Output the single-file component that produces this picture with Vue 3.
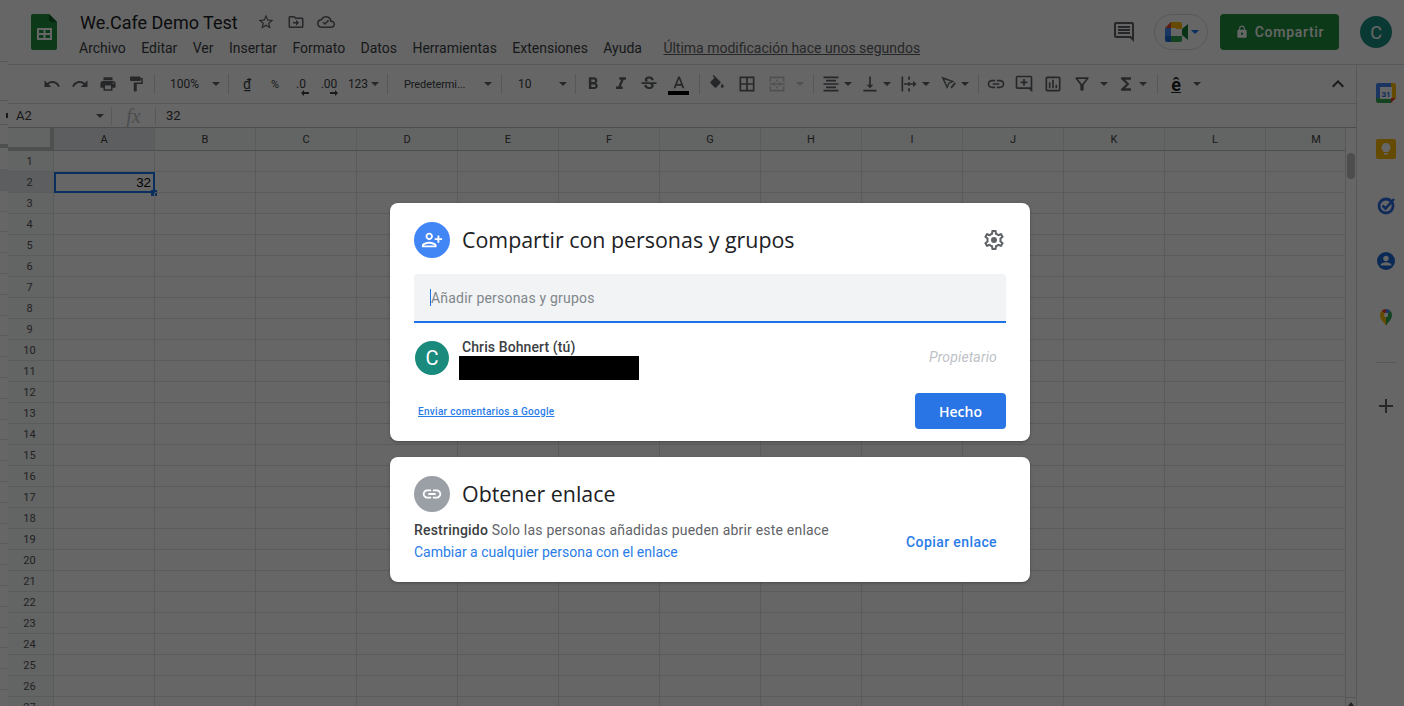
<template>
  <div class="page">
    <header class="topbar">
      <svg class="sheets-logo" viewBox="0 0 26 36" width="26" height="36">
        <path d="M2 0h16l8 8v26a2 2 0 0 1-2 2H2a2 2 0 0 1-2-2V2a2 2 0 0 1 2-2z" fill="#1e8e3e" />
        <path d="M18 0l8 8h-6a2 2 0 0 1-2-2z" fill="#0f5c27" />
        <path d="M6 14h15v12H6zm2 2v3h4.500v-3zm6.500 0v3H19v-3zM8 21v3h4.500v-3zm6.500 0v3H19v-3z" fill="#fff" fill-rule="evenodd" />
      </svg>
      <div class="doc">
        <div class="doc-title">
          <span class="doc-name">We.Cafe Demo Test</span>
          <svg class="ico" viewBox="0 0 24 24" width="18" height="18"><path :d="icons.star" /></svg>
          <svg class="ico" viewBox="0 0 24 24" width="18" height="18"><path :d="icons.move" /></svg>
          <svg class="ico" viewBox="0 0 24 24" width="18" height="18"><path :d="icons.cloud" /></svg>
        </div>
        <nav class="menu">
          <span v-for="m in menus" :key="m">{{ m }}</span>
          <a class="last-edit">Última modificación hace unos segundos</a>
        </nav>
      </div>
      <div class="top-actions">
        <svg class="ico comment" viewBox="0 0 24 24" width="24" height="24"><path :d="icons.comment" /></svg>
        <div class="meet">
          <svg viewBox="0 0 24 20" width="24" height="20">
            <path d="M0 6l6-6h9v6z" fill="#ea4335" />
            <path d="M6 0h9a2 2 0 0 1 2 2v5h-6V6H6z" fill="#fbbc04" />
            <path d="M0 6h6v8H0z" fill="#4285f4" />
            <path d="M0 14h6v6H2a2 2 0 0 1-2-2z" fill="#1967d2" />
            <path d="M6 14h11v4a2 2 0 0 1-2 2H6z" fill="#34a853" />
            <path d="M17 7l6-5v16l-6-5z" fill="#188038" />
          </svg>
          <i class="caret meet-caret"></i>
        </div>
        <button class="share">
          <svg viewBox="0 0 24 24" width="14" height="14"><path :d="icons.lock" fill="#fff" /></svg>
          Compartir
        </button>
        <div class="avatar top-avatar">C</div>
      </div>
    </header>

    <div class="body">
      <div class="main">
        <div class="toolbar">
          <template v-for="(t, i) in tools" :key="i">
            <i v-if="t.k === 'sep'" class="sep" :style="{ margin: `0 ${t.r || 0}px 0 ${t.l || 0}px` }"></i>
            <i v-else-if="t.k === 'caret'" class="caret" :class="{ faded: t.off }" :style="{ margin: `0 ${t.m || 0}px 0 ${t.l || 0}px` }"></i>
            <span v-else-if="t.k === 'text'" class="tool-text" :class="t.c" :style="{ width: t.w + 'px' }">
              {{ t.t }}
              <svg v-if="t.arrow" class="dec-arrow" :class="t.arrow" viewBox="0 0 8 6" width="8" height="6"><path d="M0 3l3-3v2h5v2H3v2z" /></svg>
            </span>
            <span v-else class="tool" :style="{ width: (t.w || 28) + 'px' }">
              <svg class="ico" :class="{ faded: t.off }" viewBox="0 0 24 24" :width="t.s || 18" :height="t.s || 18"><path :d="icons[t.i]" /></svg>
              <b v-if="t.bar" class="color-bar"></b>
            </span>
          </template>
          <svg class="ico collapse" viewBox="0 0 24 24" width="24" height="24"><path d="M7.41 15.41L12 10.83l4.59 4.58L18 14l-6-6-6 6z" /></svg>
        </div>

        <div class="formula">
          <span class="name-box">A2<i class="caret"></i></span>
          <span class="fx">fx</span>
          <span class="formula-value">32</span>
        </div>

        <div class="grid-wrap">
          <div class="grid">
            <div class="corner"></div>
            <div v-for="(c, i) in cols" :key="c" class="col-head" :class="{ active: i === 0 }">{{ c }}</div>
            <template v-for="r in rows" :key="r">
              <div class="row-head" :class="{ active: r === 2 }">{{ r }}</div>
              <div v-for="(c, i) in cols" :key="c" class="cell">
                <template v-if="r === 2 && i === 0">32<i class="sel"><b></b></i></template>
              </div>
            </template>
          </div>
          <div class="scroll"><i></i></div>
        </div>
      </div>

      <aside class="side">
        <svg viewBox="0 0 20 20" width="20" height="20">
          <path d="M0 0h20v20H0z" fill="#fff" />
          <path d="M0 2a2 2 0 0 1 2-2h13v4H4v11H0z" fill="#4285f4" />
          <path d="M15 0h3a2 2 0 0 1 2 2v13h-4V4h-1z" fill="#fbbc04" />
          <path d="M0 15h4v1h11v4H2a2 2 0 0 1-2-2z" fill="#34a853" />
          <path d="M15 15h5v0l-5 5z" fill="#ea4335" />
          <text x="10" y="13.500" class="cal-num">31</text>
        </svg>
        <svg viewBox="0 0 20 20" width="20" height="20">
          <rect width="20" height="20" rx="2" fill="#fbbc04" />
          <path d="M10 4a4.500 4.500 0 0 0-2.500 8.200V13h5v-.8A4.500 4.500 0 0 0 10 4zM8 14h4v1.500H8z" fill="#fff" />
        </svg>
        <svg viewBox="0 0 20 20" width="20" height="20">
          <circle cx="10" cy="11" r="7" fill="none" stroke="#2a6ae0" stroke-width="2.800" />
          <path d="M6.500 10.500l3 3L18 4" fill="none" stroke="#2a6ae0" stroke-width="2.600" />
        </svg>
        <svg viewBox="0 0 20 20" width="20" height="20">
          <circle cx="10" cy="10" r="9" fill="#1a67d2" />
          <circle cx="10" cy="7.500" r="2.700" fill="#fff" />
          <path d="M4.500 14.500c0-2.200 3.600-3.300 5.500-3.300s5.500 1.100 5.500 3.300z" fill="#fff" />
        </svg>
        <svg viewBox="0 0 20 20" width="20" height="20">
          <path d="M10 19c-1-3-6-6-6-11a6 6 0 0 1 1.700-4.200L10 8z" fill="#fbbc04" />
          <path d="M5.700 3.800A6 6 0 0 1 10 2l2 2-2 4z" fill="#ea4335" />
          <path d="M10 2a6 6 0 0 1 4.300 1.800L10 8z" fill="#4285f4" />
          <path d="M14.300 3.800A6 6 0 0 1 16 8c0 5-5 8-6 11V8z" fill="#34a853" />
          <circle cx="10" cy="8" r="2.200" fill="#fff" />
        </svg>
        <hr />
        <svg class="ico plus" viewBox="0 0 24 24" width="24" height="24"><path d="M19 13h-6v6h-2v-6H5v-2h6V5h2v6h6v2z" /></svg>
      </aside>
    </div>

    <div class="left-strip"></div>

    <div class="overlay">
      <section class="card share-card">
        <div class="card-head">
          <span class="round blue">
            <svg viewBox="0 0 24 24" width="22" height="22"><path :d="icons.personAdd" fill="#fff" transform="matrix(-1 0 0 1 24 0)" /></svg>
          </span>
          <h2>Compartir con personas y grupos</h2>
          <svg class="ico gear" viewBox="0 0 24 24" width="24" height="24"><path :d="icons.gear" fill-rule="evenodd" /><circle cx="12" cy="12" r="3" /></svg>
        </div>
        <div class="add-field"><i class="cursor"></i>Añadir personas y grupos</div>
        <div class="person">
          <div class="avatar">C</div>
          <div class="person-info">
            <div class="person-name">Chris Bohnert (tú)</div>
            <div class="redacted"></div>
          </div>
          <em>Propietario</em>
        </div>
        <div class="share-foot">
          <a class="feedback">Enviar comentarios a Google</a>
          <button class="done">Hecho</button>
        </div>
      </section>

      <section class="card link-card">
        <div class="card-head">
          <span class="round grey">
            <svg viewBox="0 0 24 24" width="22" height="22"><path :d="icons.link" fill="#fff" /></svg>
          </span>
          <h2>Obtener enlace</h2>
        </div>
        <div class="link-body">
          <div>
            <p><strong>Restringido</strong> Solo las personas añadidas pueden abrir este enlace</p>
            <a class="change">Cambiar a cualquier persona con el enlace</a>
          </div>
          <a class="copy">Copiar enlace</a>
        </div>
      </section>
    </div>
  </div>
</template>

<script setup>
const icons = {
  star: 'M22 9.24l-7.19-.62L12 2 9.19 8.63 2 9.24l5.46 4.73L5.82 21 12 17.27 18.18 21l-1.63-7.03L22 9.24zM12 15.4l-3.76 2.27 1-4.28-3.32-2.88 4.38-.38L12 6.1l1.71 4.04 4.38.38-3.32 2.88 1 4.28L12 15.4z',
  move: 'M20 6h-8l-2-2H4c-1.1 0-2 .9-2 2v12c0 1.1.9 2 2 2h16c1.1 0 2-.9 2-2V8c0-1.1-.9-2-2-2zm0 12H4V6h5.17l2 2H20v10zm-8-1l4-4-4-4v3H8v2h4z',
  cloud: 'M19.35 10.04A7.49 7.49 0 0 0 12 4C9.11 4 6.6 5.64 5.35 8.04A5.994 5.994 0 0 0 0 14c0 3.31 2.69 6 6 6h13c2.76 0 5-2.24 5-5 0-2.64-2.05-4.78-4.65-4.96zM19 18H6c-2.21 0-4-1.79-4-4s1.79-4 4-4h.71C7.37 7.69 9.48 6 12 6c3.04 0 5.5 2.46 5.5 5.5v.5H19c1.66 0 3 1.34 3 3s-1.34 3-3 3zm-8.5-2l-3-3 1.4-1.4 1.6 1.6 4.1-4.1 1.4 1.4z',
  comment: 'M21.99 4c0-1.1-.89-2-1.99-2H4c-1.1 0-2 .9-2 2v12c0 1.1.9 2 2 2h14l4 4-.01-18zM20 4v13.17L18.83 16H4V4h16zM6 12h12v2H6zm0-3h12v2H6zm0-3h12v2H6z',
  lock: 'M18 8h-1V6c0-2.76-2.24-5-5-5S7 3.24 7 6v2H6c-1.1 0-2 .9-2 2v10c0 1.1.9 2 2 2h12c1.1 0 2-.9 2-2V10c0-1.1-.9-2-2-2zm-6 9c-1.1 0-2-.9-2-2s.9-2 2-2 2 .9 2 2-.9 2-2 2zm3.1-9H8.9V6c0-1.71 1.39-3.1 3.1-3.1 1.71 0 3.1 1.39 3.1 3.1v2z',
  undo: 'M12.5 8c-2.65 0-5.05.99-6.9 2.6L2 7v9h9l-3.62-3.62c1.39-1.16 3.16-1.88 5.12-1.88 3.54 0 6.55 2.31 7.6 5.5l2.37-.78C21.08 11.03 17.15 8 12.5 8z',
  redo: 'M18.4 10.6C16.55 8.99 14.15 8 11.5 8c-4.65 0-8.58 3.03-9.96 7.22L3.9 16c1.05-3.19 4.05-5.5 7.6-5.5 1.95 0 3.73.72 5.12 1.88L13 16h9V7l-3.6 3.6z',
  print: 'M19 8H5c-1.66 0-3 1.34-3 3v6h4v4h12v-4h4v-6c0-1.66-1.34-3-3-3zm-3 11H8v-5h8v5zm3-7c-.55 0-1-.45-1-1s.45-1 1-1 1 .45 1 1-.45 1-1 1zm-1-9H6v4h12V3z',
  paint: 'M18 4V3c0-.55-.45-1-1-1H5c-.55 0-1 .45-1 1v4c0 .55.45 1 1 1h12c.55 0 1-.45 1-1V6h1v4H9v11c0 .55.45 1 1 1h2c.55 0 1-.45 1-1v-9h8V4h-3z',
  bold: 'M15.6 10.79c.97-.67 1.65-1.77 1.65-2.79 0-2.26-1.75-4-4-4H7v14h7.04c2.09 0 3.71-1.7 3.71-3.79 0-1.52-.86-2.82-2.15-3.42zM10 6.5h3c.83 0 1.5.67 1.5 1.5s-.67 1.5-1.5 1.5h-3v-3zm3.5 9H10v-3h3.5c.83 0 1.5.67 1.5 1.5s-.67 1.5-1.5 1.5z',
  italic: 'M10 4v3h2.21l-3.42 8H6v3h8v-3h-2.21l3.42-8H18V4z',
  strike: 'M7.24 8.75c-.26-.48-.39-1.03-.39-1.67 0-.61.13-1.16.4-1.67.26-.5.63-.93 1.11-1.29.48-.35 1.05-.63 1.7-.83.66-.19 1.39-.29 2.18-.29.81 0 1.54.11 2.21.34.66.22 1.23.54 1.69.94.47.4.83.88 1.08 1.43.25.55.38 1.15.38 1.81h-3.01c0-.31-.05-.59-.15-.85-.09-.27-.24-.49-.44-.68-.2-.19-.45-.33-.75-.44-.3-.1-.66-.16-1.06-.16-.39 0-.74.04-1.03.13-.29.09-.53.21-.72.36-.19.16-.34.34-.44.55-.1.21-.15.43-.15.66 0 .48.25.88.74 1.21.38.25.77.48 1.41.7H7.39c-.05-.08-.11-.17-.15-.25zM21 12v-2H3v2h9.62c.18.07.4.14.55.2.37.17.66.34.87.51.21.17.35.36.43.57.07.2.11.43.11.69 0 .23-.05.45-.14.66-.09.2-.23.38-.42.53-.19.15-.42.26-.71.35-.29.08-.63.13-1.01.13-.43 0-.83-.04-1.18-.13s-.66-.23-.91-.42c-.25-.19-.45-.44-.59-.75-.14-.31-.25-.76-.25-1.21H6.4c0 .55.08 1.13.24 1.58.16.45.37.85.65 1.21.28.35.6.66.98.92.37.26.78.48 1.22.65.44.17.9.3 1.38.39.48.08.96.13 1.44.13.8 0 1.53-.09 2.18-.28s1.21-.45 1.67-.79c.46-.34.82-.77 1.07-1.27s.38-1.07.38-1.71c0-.6-.1-1.14-.31-1.61-.05-.11-.11-.23-.17-.33H21z',
  textColor: 'M11 3L5.5 17h2.25l1.12-3h6.25l1.12 3h2.25L13 3h-2zm-1.38 9L12 5.67 14.38 12H9.62z',
  fill: 'M16.56 8.94L7.62 0 6.21 1.41l2.38 2.38-5.15 5.15c-.59.59-.59 1.54 0 2.12l5.5 5.5c.29.29.68.44 1.06.44s.77-.15 1.06-.44l5.5-5.5c.59-.58.59-1.53 0-2.12zM19 11.5s-2 2.17-2 3.5c0 1.1.9 2 2 2s2-.9 2-2c0-1.33-2-3.5-2-3.5z',
  borders: 'M3 3v18h18V3H3zm8 16H5v-6h6v6zm0-8H5V5h6v6zm8 8h-6v-6h6v6zm0-8h-6V5h6v6z',
  merge: 'M3 3h18v6h-2V5H5v4H3zM3 15h2v4h14v-4h2v6H3zM11 7h2v2h-2zM11 11h2v2h-2zM11 15h2v2h-2zM3 11h5V9l3 3-3 3v-2H3zM21 13h-5v2l-3-3 3-3v2h5z',
  align: 'M3 3h18v2H3zm3 4h12v2H6zM3 11h18v2H3zm3 4h12v2H6zM3 19h18v2H3z',
  valign: 'M16 13h-3V3h-2v10H8l4 4 4-4zM4 19v2h16v-2H4z',
  wrap: 'M3 3h2v18H3zM11 3h2v4h-2zM11 10h2v4h-2zM11 17h2v4h-2zM6 11h11V8l4 4-4 4v-3H6z',
  rotate: 'M4 3l16 6-6.2 2.300L11 18 4 3zm3.500 3.600L11.100 14l1.500-3.800 3.300-1.200zM15 16l5-6 1.500 1.300-5 6z',
  link: 'M3.9 12c0-1.71 1.39-3.1 3.1-3.1h4V7H7c-2.76 0-5 2.24-5 5s2.24 5 5 5h4v-1.9H7c-1.71 0-3.1-1.39-3.1-3.1zM8 13h8v-2H8v2zm9-6h-4v1.9h4c1.71 0 3.1 1.39 3.1 3.1s-1.39 3.1-3.1 3.1h-4V17h4c2.76 0 5-2.24 5-5s-2.24-5-5-5z',
  addComment: 'M21.99 4c0-1.1-.89-2-1.99-2H4c-1.1 0-2 .9-2 2v12c0 1.1.9 2 2 2h14l4 4-.01-18zM20 16H4V4h16v12zM11 6h2v3h3v2h-3v3h-2v-3H8V9h3z',
  chart: 'M19 3H5c-1.1 0-2 .9-2 2v14c0 1.1.9 2 2 2h14c1.1 0 2-.9 2-2V5c0-1.1-.9-2-2-2zm0 16H5V5h14v14zM7 10h2v7H7zm4-3h2v10h-2zm4 6h2v4h-2z',
  filter: 'M4.25 5.61C6.27 8.2 10 13 10 13v6c0 .55.45 1 1 1h2c.55 0 1-.45 1-1v-6s3.72-4.8 5.74-7.39A1 1 0 0 0 18.95 4H5.04a1 1 0 0 0-.79 1.61zM7 6h10l-5 6.3z',
  sigma: 'M18 4H6v2l6.5 6L6 18v2h12v-3h-7l5-5-5-5h7z',
  personAdd: 'M15 12c2.21 0 4-1.79 4-4s-1.79-4-4-4-4 1.79-4 4 1.79 4 4 4zm0-6c1.1 0 2 .9 2 2s-.9 2-2 2-2-.9-2-2 .9-2 2-2zm0 8c-2.67 0-8 1.34-8 4v2h16v-2c0-2.66-5.33-4-8-4zm-6 4c.22-.72 3.31-2 6-2 2.7 0 5.8 1.29 6 2H9zm-3-3v-3h3v-2H6V7H4v3H1v2h3v3h2z',
  gear: 'M19.43 12.98c.04-.32.07-.64.07-.98 0-.34-.03-.66-.07-.98l2.11-1.65c.19-.15.24-.42.12-.64l-2-3.46c-.09-.16-.26-.25-.44-.25-.06 0-.12.01-.17.03l-2.49 1c-.52-.4-1.08-.73-1.69-.98l-.38-2.65C14.46 2.18 14.25 2 14 2h-4c-.25 0-.46.18-.49.42l-.38 2.65c-.61.25-1.17.59-1.69.98l-2.49-1c-.06-.02-.12-.03-.18-.03-.17 0-.34.09-.43.25l-2 3.46c-.13.22-.07.49.12.64l2.11 1.65c-.04.32-.07.65-.07.98 0 .33.03.66.07.98l-2.11 1.65c-.19.15-.24.42-.12.64l2 3.46c.09.16.26.25.44.25.06 0 .12-.01.17-.03l2.49-1c.52.4 1.08.73 1.69.98l.38 2.65c.03.24.24.42.49.42h4c.25 0 .46-.18.49-.42l.38-2.65c.61-.25 1.17-.59 1.69-.98l2.49 1c.06.02.12.03.18.03.17 0 .34-.09.43-.25l2-3.46c.12-.22.07-.49-.12-.64l-2.11-1.65zm-1.98-1.71c.04.31.05.52.05.73 0 .21-.02.43-.05.73l-.14 1.13.89.7 1.08.84-.7 1.21-1.27-.51-1.04-.42-.9.68c-.43.32-.84.56-1.25.73l-1.06.43-.16 1.13-.2 1.35h-1.4l-.19-1.35-.16-1.13-1.06-.43c-.43-.18-.83-.41-1.23-.71l-.91-.7-1.06.43-1.27.51-.7-1.21 1.08-.84.89-.7-.14-1.13c-.03-.31-.05-.54-.05-.74s.02-.43.05-.73l.14-1.13-.89-.7-1.08-.84.7-1.21 1.27.51 1.04.42.9-.68c.43-.32.84-.56 1.25-.73l1.06-.43.16-1.13.2-1.35h1.39l.19 1.35.16 1.13 1.06.43c.43.18.83.41 1.23.71l.91.7 1.06-.43 1.27-.51.7 1.21-1.07.85-.89.7.14 1.13z'
}

const menus = ['Archivo', 'Editar', 'Ver', 'Insertar', 'Formato', 'Datos', 'Herramientas', 'Extensiones', 'Ayuda']

const cols = 'ABCDEFGHIJKLM'.split('')
const rows = Array.from({ length: 27 }, (_, i) => i + 1)

// widths and margins follow the reference's toolbar spacing
const tools = [
  { i: 'undo' }, { i: 'redo' }, { i: 'print' }, { i: 'paint' },
  { k: 'sep', l: 4, r: 15 },
  { k: 'text', t: '100%', w: 42 }, { k: 'caret' },
  { k: 'sep', l: 8, r: 4 },
  { k: 'text', t: '₫', w: 28, c: 'center under' }, { k: 'text', t: '%', w: 28, c: 'center small' },
  { k: 'text', t: '.0', w: 24, c: 'center', arrow: 'left' }, { k: 'text', t: '.00', w: 32, c: 'center', arrow: 'right' },
  { k: 'text', t: '123', w: 26, c: 'center' }, { k: 'caret' },
  { k: 'sep', l: 8, r: 16 },
  { k: 'text', t: 'Predetermi...', w: 80, c: 'tight' }, { k: 'caret' },
  { k: 'sep', l: 9, r: 16 },
  { k: 'text', t: '10', w: 41 }, { k: 'caret' },
  { k: 'sep', l: 8, r: 3 },
  { i: 'bold', s: 20 }, { i: 'italic', s: 20 }, { i: 'strike', s: 20 }, { i: 'textColor', w: 32, s: 20, bar: true },
  { k: 'sep', l: 4, r: 2 },
  { i: 'fill', w: 30 }, { i: 'borders', w: 30, s: 20 }, { i: 'merge', w: 30, s: 20, off: true }, { k: 'caret', off: true, l: 4 },
  { k: 'sep', l: 9, r: 5 },
  { i: 'align', w: 24, s: 20 }, { k: 'caret', l: 1, m: 6 },
  { i: 'valign', w: 24, s: 20 }, { k: 'caret', l: 1, m: 6 },
  { i: 'wrap', w: 24, s: 20 }, { k: 'caret', l: 1, m: 6 },
  { i: 'rotate', w: 24, s: 20 }, { k: 'caret', l: 1 },
  { k: 'sep', l: 9, r: 3 },
  { i: 'link', s: 20 }, { i: 'addComment', s: 20 }, { i: 'chart', w: 30, s: 20 }, { i: 'filter', s: 20 }, { k: 'caret', l: 4, m: 6 },
  { i: 'sigma', w: 24, s: 20 }, { k: 'caret', l: 1 },
  { k: 'sep', l: 10, r: 2 },
  { k: 'text', t: 'ê', w: 32, c: 'center big' }, { k: 'caret', l: 1 }
]
</script>

<style>
html, body { margin: 0; overflow: hidden; }
</style>

<style scoped>
.page {
  position: relative;
  width: 1404px;
  height: 706px;
  overflow: hidden;
  background: #fff;
  font-family: Roboto, "Liberation Sans", sans-serif;
  color: #3c4043;
}

.ico { fill: #5f6368; display: block; flex: none; }
.faded { opacity: .35; }

.caret {
  display: inline-block;
  flex: none;
  width: 0;
  height: 0;
  border: 4px solid transparent;
  border-top: 4px solid #5f6368;
  border-bottom: 0;
}

/* header */
.topbar {
  height: 64px;
  display: flex;
  border-bottom: 1px solid #dadce0;
}
.sheets-logo { margin: 14px 0 0 31px; flex: none; }
.doc { margin-left: 23px; }
.doc-title { display: flex; align-items: center; gap: 12px; height: 22px; margin-top: 11px; }
.doc-name { font-size: 18px; color: #202124; width: 165px; white-space: nowrap; }
.menu { display: flex; gap: 15.4px; margin: 5px 0 0 -1px; font-size: 14px; height: 20px; line-height: 20px; white-space: nowrap; }
.last-edit { margin-left: 6px; color: #5f6368; text-decoration: underline; }
.top-actions { margin-left: auto; display: flex; align-items: center; padding: 14px 12px 0 0; height: 36px; }
.comment { margin-right: 18px; }
.meet {
  width: 54px;
  height: 36px;
  box-sizing: border-box;
  border: 1px solid #dadce0;
  border-radius: 18px;
  display: flex;
  align-items: center;
  padding-left: 10px;
  gap: 2px;
  margin-right: 12px;
}
.meet-caret { border-top-color: #1a73e8; }
.share {
  width: 119px;
  height: 36px;
  border: 0;
  border-radius: 4px;
  background: #1e8e3e;
  color: #fff;
  font: 500 14px Roboto, sans-serif;
  letter-spacing: .7px;
  display: flex;
  align-items: center;
  justify-content: center;
  gap: 6px;
}
.avatar {
  width: 34px;
  height: 34px;
  border-radius: 50%;
  background: #1a8a7c;
  color: #fff;
  font-size: 20px;
  display: flex;
  align-items: center;
  justify-content: center;
  flex: none;
}
.top-avatar { width: 32px; height: 32px; margin-left: 21px; font-size: 18px; background: #1a9080; }

.body { display: flex; height: 641px; }
.main { width: 1356px; flex: none; display: flex; flex-direction: column; }

/* toolbar */
.toolbar {
  height: 38px;
  display: flex;
  align-items: center;
  padding: 0 6px 0 38px;
  border-bottom: 1px solid #dadce0;
}
.tool { display: flex; justify-content: center; align-items: center; flex: none; position: relative; }
.color-bar { position: absolute; left: 5px; top: 17px; width: 21px; height: 4px; background: #000; }
.tool-text { font-size: 12px; flex: none; white-space: nowrap; color: #3c4043; position: relative; }
.tool-text.center { text-align: center; }
.tool-text.big { font-size: 18px; font-weight: 700; color: #202124; text-decoration: underline; }
.tool-text.under { text-decoration: underline; font-size: 14px; }
.tool-text.small { font-size: 11px; }
.tool-text.tight { font-size: 11px; letter-spacing: -.1px; }
.dec-arrow { position: absolute; bottom: -5px; fill: #3c4043; }
.dec-arrow.left { left: 12px; }
.dec-arrow.right { right: 7px; transform: scaleX(-1); }
.sep { width: 1px; height: 20px; background: #dadce0; flex: none; }
.collapse { margin-left: auto; fill: #3c4043; }

/* formula bar */
.formula {
  height: 24px;
  box-sizing: border-box;
  display: flex;
  align-items: center;
  margin-left: 8px;
  border-bottom: 1px solid #c0c0c0;
  flex: none;
}
.name-box {
  width: 104px;
  height: 18px;
  box-sizing: border-box;
  padding: 0 7px 0 8px;
  display: flex;
  justify-content: space-between;
  align-items: center;
  font-size: 13px;
  border-right: 1px solid #dadce0;
}
.fx {
  width: 44px;
  height: 18px;
  box-sizing: border-box;
  text-align: center;
  font: italic 20px/18px "Liberation Serif", serif;
  color: #bdc1c6;
  border-right: 1px solid #dadce0;
}
.formula-value { padding-left: 10px; font-size: 13px; }

/* grid */
.grid-wrap { display: flex; flex: 1; overflow: hidden; }
.grid {
  display: grid;
  grid-template-columns: 54px repeat(13, 101px);
  grid-template-rows: 23px;
  grid-auto-rows: 21px;
  width: 1345px;
  flex: none;
  overflow: hidden;
}
.grid > * { box-sizing: border-box; border-right: 1px solid #e2e3e3; border-bottom: 1px solid #e2e3e3; position: relative; }
.corner { background: #f8f9fa; border-right: 4px solid #c4c7c9 !important; border-bottom: 4px solid #c4c7c9 !important; }
.col-head {
  background: #f8f9fa;
  font-size: 11px;
  text-align: center;
  line-height: 24px;
  color: #444;
  border-bottom-color: #c0c0c0 !important;
}
.col-head.active { background: #e8eaed; }
.row-head { background: #f8f9fa; font-size: 11px; text-align: center; line-height: 22px; color: #555; padding-left: 6px; }
.row-head.active { background: #e8eaed; }
.cell { font: 13.33px/21px "Liberation Sans", sans-serif; text-align: right; padding-right: 3px; color: #000; }
.sel { position: absolute; inset: 0 -1px -1px 0; border: 2px solid #1a73e8; }
.sel b { position: absolute; right: -4px; bottom: -5px; width: 6px; height: 6px; background: #1a73e8; }
.scroll { width: 11px; border-left: 1px solid #dadce0; box-sizing: border-box; flex: none; background: #fff; position: relative; }
.scroll i { display: block; width: 8px; height: 26px; margin: 25px 0 0 1px; background: #c1c1c1; border-radius: 4px; }
.scroll::before { content: ""; position: absolute; left: 0; right: 0; bottom: 8px; border-top: 1px solid #dadce0; }
.scroll::after {
  content: "";
  position: absolute;
  left: 2px;
  bottom: 0;
  border: 3px solid transparent;
  border-bottom: 4px solid #555;
  border-top: 0;
}

/* side panel */
.side {
  width: 48px;
  flex: none;
  border-left: 1px solid #dadce0;
  box-sizing: border-box;
  display: flex;
  flex-direction: column;
  align-items: center;
  padding: 18px 0 0 10px;
  gap: 36px;
}
.cal-num { font: 700 8px Roboto, sans-serif; fill: #1a73e8; text-anchor: middle; }
.side hr { width: 20px; margin: -1px 0 -5px; border: 0; border-top: 1px solid #dadce0; }

/* sliver of the page behind, left edge */
.left-strip {
  position: absolute;
  left: 0;
  top: 0;
  width: 8px;
  height: 100%;
  background:
    linear-gradient(#3c4043, #3c4043) 6px 113px / 2px 5px no-repeat,
    linear-gradient(#c4c7c9, #c4c7c9) 0 144px / 8px 4px no-repeat,
    linear-gradient(#dadce0, #dadce0) 0 61px / 8px 1px no-repeat,
    linear-gradient(#dadce0, #dadce0) 0 100px / 8px 1px no-repeat,
    linear-gradient(#dadce0, #dadce0) 0 124px / 8px 1px no-repeat,
    linear-gradient(#e8eaed, #e8eaed) 0 169px / 8px 21px no-repeat,
    repeating-linear-gradient(#e2e3e3 0 1px, #fff 1px 20.8px) 0 169px / 8px 537px no-repeat,
    #fff;
}

/* dialog */
.overlay {
  position: absolute;
  inset: 0;
  background: rgba(0, 0, 0, .6);
  display: flex;
  flex-direction: column;
  align-items: center;
  padding: 203px 0 0 16px;
  gap: 16px;
}
.card {
  width: 640px;
  background: #fff;
  border-radius: 8px;
  box-sizing: border-box;
  padding: 0 24px;
  box-shadow: 0 1px 3px rgba(0,0,0,.3);
}
.share-card { height: 238px; padding-top: 19px; }
.link-card { height: 125px; padding-top: 19px; }
.card-head { display: flex; align-items: center; height: 36px; }
.round { width: 36px; height: 36px; border-radius: 50%; display: flex; align-items: center; justify-content: center; flex: none; }
.blue { background: #4285f4; }
.grey { background: #9aa0a6; }
h2 { margin: -2px 0 0 12px; font: 400 21.4px "Open Sans", sans-serif; color: #202124; white-space: nowrap; flex: 1; }
.gear { fill: #5f6368; }
.add-field {
  margin-top: 16px;
  height: 47px;
  background: #f1f3f4;
  border-radius: 4px 4px 0 0;
  border-bottom: 2px solid #1a73e8;
  display: flex;
  align-items: center;
  padding-left: 16px;
  font-size: 14px;
  color: #80868b;
  letter-spacing: .2px;
}
.cursor { width: 1px; height: 17px; background: #1a73e8; }
.person { display: flex; align-items: flex-start; margin-top: 17px; height: 38px; }
.person .avatar { margin: 1px 0 0 1px; }
.person-info { margin-left: 13px; }
.person-name { font-size: 14px; font-weight: 500; color: #3c4043; line-height: 15px; letter-spacing: .1px; }
.redacted { width: 180px; height: 24px; background: #000; margin: 1px 0 0 -3px; }
.person em { margin: 9px 0 0 auto; padding-right: 9px; font-size: 14px; line-height: 16px; color: #bdc1c6; letter-spacing: .15px; }
.share-foot { display: flex; justify-content: space-between; align-items: center; margin-top: 15px; }
.feedback { font-size: 10px; color: #2a7ce8; text-decoration: underline; font-weight: 500; margin-left: 4px; letter-spacing: .3px; }
.done {
  width: 91px;
  height: 36px;
  border: 0;
  border-radius: 4px;
  background: #2a75e5;
  color: #fff;
  font: 600 14px "Open Sans", sans-serif;
}
.link-body { display: flex; justify-content: space-between; align-items: center; margin-top: 8px; }
.link-body p { margin: 0; font-size: 14px; color: #5f6368; line-height: 20px; white-space: nowrap; letter-spacing: .2px; }
.link-body strong { font-weight: 500; color: #3c4043; }
.change { display: block; margin-top: 2px; font-size: 14px; line-height: 20px; color: #2a7ce8; }
.copy { font-size: 14px; font-weight: 500; color: #2a7ce8; padding: 2px 9px 0 0; letter-spacing: .4px; }
</style>
